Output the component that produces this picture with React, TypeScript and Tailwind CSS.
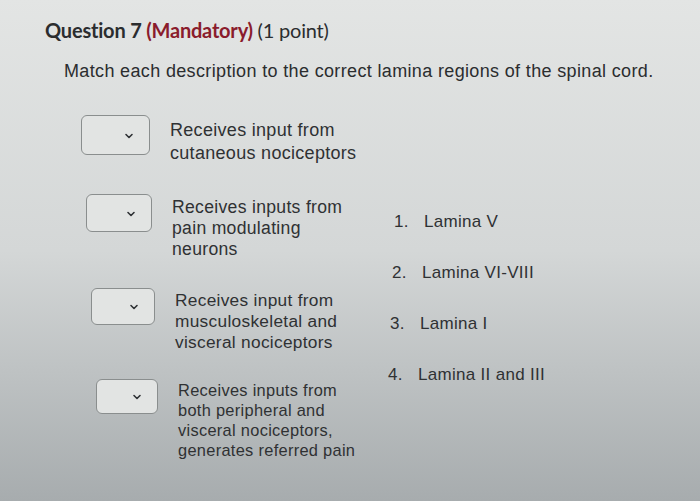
import { ChevronDown } from 'lucide-react'

const rows = [
  { lines: ['Receives input from', 'cutaneous nociceptors'], ml: 'ml-[36px]', mt: 'mt-0', pt: 'pt-[4px]', lh: 'leading-[23px]', fs: 'text-[18px]', box: 'w-[69px] h-[40px]' },
  { lines: ['Receives inputs from', 'pain modulating', 'neurons'], ml: 'ml-[41px]', mt: 'mt-[29px]', pt: 'pt-[3px]', lh: 'leading-[21px]', fs: 'text-[17.6px]', box: 'w-[66px] h-[38px]' },
  { lines: ['Receives input from', 'musculoskeletal and', 'visceral nociceptors'], ml: 'ml-[46px]', mt: 'mt-[28px]', pt: 'pt-[2px]', lh: 'leading-[21px]', fs: 'text-[17.3px]', box: 'w-[64px] h-[37px]' },
  { lines: ['Receives inputs from', 'both peripheral and', 'visceral nociceptors,', 'generates referred pain'], ml: 'ml-[51px]', mt: 'mt-[26px]', pt: 'pt-[1px]', lh: 'leading-[20px]', fs: 'text-[16.4px]', box: 'w-[62px] h-[35px]' },
]

const options = [
  { n: '1.', label: 'Lamina V', ml: 'ml-[6px]' },
  { n: '2.', label: 'Lamina VI-VIII', ml: 'ml-[4px]' },
  { n: '3.', label: 'Lamina I', ml: 'ml-[2px]' },
  { n: '4.', label: 'Lamina II and III', ml: 'ml-0' },
]

function Dropdown({ size }: { size: string }) {
  return (
    <div className={`${size} shrink-0 rounded-[6px] border border-[#8a8e8e] bg-[#e2e4e3] flex items-center justify-end pr-[14px]`}>
      <ChevronDown size={12} strokeWidth={3.2} className="text-[#2f3235] mt-[1px]" />
    </div>
  )
}

export default function App() {
  return (
    <div className="w-[700px] h-[501px] overflow-hidden bg-linear-to-b from-[#e3e5e4] via-[#d4d7d7] to-[#a7acae] pl-[45px] pt-[17px] text-[#2b2d2f]">
      {/* Header */}
      <h2 className="text-[20px] font-bold leading-[26px] tracking-[-0.2px]" style={{ fontFamily: 'Lato, "Open Sans", sans-serif' }}>
        Question 7 <span className="text-[#8a1c2c]">(Mandatory)</span> <span className="font-normal">(1 point)</span>
      </h2>
      <p className="ml-[19px] mt-[17px] text-[18px] leading-[22px] tracking-[0.35px]" style={{ fontFamily: '"Liberation Sans", Arial, sans-serif' }}>
        Match each description to the correct lamina regions of the spinal cord.
      </p>

      <div className="flex mt-[33px]" style={{ fontFamily: '"Liberation Sans", Arial, sans-serif' }}>
        {/* Descriptions with dropdowns */}
        <div className="flex flex-col w-[343px]">
          {rows.map((r, i) => (
            <div key={i} className={`flex items-start gap-[20px] ${r.ml} ${r.mt}`}>
              <Dropdown size={r.box} />
              <p className={`${r.fs} tracking-[0.3px] ${r.lh} ${r.pt} text-[#2f3133] whitespace-nowrap`}>
                {r.lines.map((l, j) => (
                  <span key={j} className="block">{l}</span>
                ))}
              </p>
            </div>
          ))}
        </div>

        {/* Numbered options */}
        <div className="flex flex-col gap-[29px] pt-[96px]">
          {options.map(o => (
            <div key={o.n} className={`flex items-center text-[17px] tracking-[0.3px] leading-[22px] text-[#2f3133] ${o.ml}`}>
              <span className="w-[30px]">{o.n}</span>
              <span>{o.label}</span>
            </div>
          ))}
        </div>
      </div>
    </div>
  )
}
